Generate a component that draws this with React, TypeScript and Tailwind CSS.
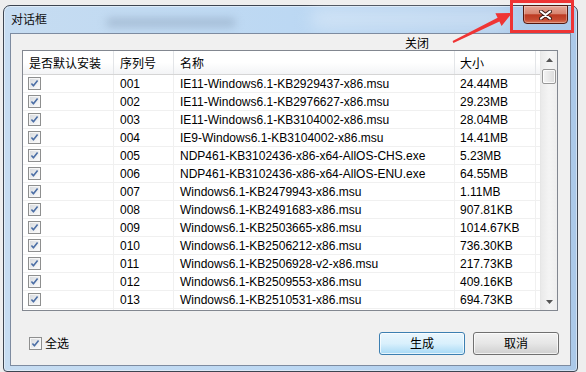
import React from "react";

const rows: [string, string, string][] = [
  ["001", "IE11-Windows6.1-KB2929437-x86.msu", "24.44MB"],
  ["002", "IE11-Windows6.1-KB2976627-x86.msu", "29.23MB"],
  ["003", "IE11-Windows6.1-KB3104002-x86.msu", "28.04MB"],
  ["004", "IE9-Windows6.1-KB3104002-x86.msu", "14.41MB"],
  ["005", "NDP461-KB3102436-x86-x64-AllOS-CHS.exe", "5.23MB"],
  ["006", "NDP461-KB3102436-x86-x64-AllOS-ENU.exe", "64.55MB"],
  ["007", "Windows6.1-KB2479943-x86.msu", "1.11MB"],
  ["008", "Windows6.1-KB2491683-x86.msu", "907.81KB"],
  ["009", "Windows6.1-KB2503665-x86.msu", "1014.67KB"],
  ["010", "Windows6.1-KB2506212-x86.msu", "736.30KB"],
  ["011", "Windows6.1-KB2506928-v2-x86.msu", "217.73KB"],
  ["012", "Windows6.1-KB2509553-x86.msu", "409.16KB"],
  ["013", "Windows6.1-KB2510531-x86.msu", "694.73KB"],
];

function Check() {
  return (
    <svg width="13" height="13" viewBox="0 0 13 13" className="block shrink-0">
      <defs>
        <linearGradient id="cbg" x1="0" y1="0" x2="1" y2="1">
          <stop offset="0" stopColor="#d8dbdf" />
          <stop offset="1" stopColor="#fbfbfb" />
        </linearGradient>
      </defs>
      <rect x="0.5" y="0.5" width="12" height="12" fill="#f6f6f6" stroke="#8e8f8f" />
      <rect x="2" y="2" width="9" height="9" fill="url(#cbg)" />
      <path d="M3.4 6.4 L5.4 8.8 L9.6 3.4" fill="none" stroke="#4c6fa6" strokeWidth="1.6" strokeLinejoin="round" />
    </svg>
  );
}

function Arrow({ down }: { down?: boolean }) {
  return (
    <svg width="7" height="4" viewBox="0 0 7 4" className="block">
      {down ? (
        <path d="M0 0 H7 L3.5 4 Z" fill="#555" />
      ) : (
        <path d="M0 4 H7 L3.5 0 Z" fill="#555" />
      )}
    </svg>
  );
}

export default function App() {
  return (
    <div className="relative w-[586px] h-[372px] overflow-hidden bg-[#eeeeee] font-['Liberation_Sans','Noto_Sans_CJK_SC',sans-serif] text-[12px] text-black">
      <div className="pl-[3px] pt-[5px] pr-[8px]">
        <div className="relative h-[367px] rounded-t-[7px] rounded-b-[4px] border border-[#3d4551] bg-gradient-to-r from-[#c6dcf1] via-[#bcd8f3] to-[#abc9e9] shadow-[inset_0_0_0_1px_rgba(255,255,255,0.45)] px-[6px] pb-[5px] flex flex-col">
          {/* title bar */}
          <div className="relative h-[27px] flex items-center pl-[1px]">
            <div className="absolute left-[96px] top-[12px] w-[130px] h-[9px] rounded-full bg-[#8aa0b9] opacity-50 blur-[4px]" />
            <div className="absolute left-[300px] top-[2px] w-[200px] h-[22px] rounded-full bg-white opacity-30 blur-[8px]" />
            <span className="relative leading-[14px] text-[12px] text-[#111]">对话框</span>
          </div>
          {/* client */}
          <div className="relative h-[333px] border border-[#7d8ba0] bg-[#f0f0f0] flex flex-col">
            <span className="absolute left-[394px] top-[3px] leading-[14px] text-[12px]">关闭</span>
            {/* list view */}
            <div className="relative z-10 ml-[11px] mt-[16px] w-[536px] h-[261px] border border-[#828790] bg-white flex">
              <div className="w-[517px] flex flex-col">
                <div className="h-[24px] border-b border-[#d5d5d5] bg-gradient-to-b from-white via-white to-[#f3f4f6] flex">
                  <div className="w-[91px] border-r border-[#e3e5e8] pl-[6px] pt-[6px] leading-[14px]">是否默认安装</div>
                  <div className="w-[60px] border-r border-[#e3e5e8] pl-[6px] pt-[6px] leading-[14px]">序列号</div>
                  <div className="w-[281px] border-r border-[#e3e5e8] pl-[6px] pt-[6px] leading-[14px]">名称</div>
                  <div className="w-[81px] border-r border-[#e3e5e8] pl-[5px] pt-[6px] leading-[14px]">大小</div>
                  <div className="flex-1" />
                </div>
                <div className="h-[235px] overflow-hidden">
                  {rows.map(([n, name, size]) => (
                    <div key={n} className="h-[18px] border-b border-[#f0f0f0] flex">
                      <div className="w-[91px] border-r border-[#f0f0f0] pl-[5px] flex items-center">
                        <Check />
                      </div>
                      <div className="w-[60px] border-r border-[#f0f0f0] pl-[6px] flex items-center leading-[14px]">{n}</div>
                      <div className="w-[281px] border-r border-[#f0f0f0] pl-[6px] flex items-center leading-[14px] whitespace-nowrap">{name}</div>
                      <div className="w-[81px] border-r border-[#f0f0f0] pl-[5px] flex items-center leading-[14px]">{size}</div>
                      <div className="flex-1" />
                    </div>
                  ))}
                  <div className="h-[18px] flex">
                    <div className="w-[91px] border-r border-[#f0f0f0]" />
                    <div className="w-[60px] border-r border-[#f0f0f0]" />
                    <div className="w-[281px] border-r border-[#f0f0f0]" />
                    <div className="w-[81px] border-r border-[#f0f0f0]" />
                  </div>
                </div>
              </div>
              {/* scrollbar */}
              <div className="w-[17px] bg-gradient-to-r from-[#eaeaea] via-[#f4f4f4] to-[#eeeeee] border-l border-[#e6e6e6] flex flex-col">
                <div className="h-[17px] flex items-center justify-center pt-[1px]">
                  <Arrow />
                </div>
                <div className="mt-[1px] ml-[1px] w-[14px] h-[15px] rounded-[2px] border border-[#979797] bg-gradient-to-r from-[#f4f4f4] to-[#dcdcdc] shadow-[inset_0_0_0_1px_rgba(255,255,255,0.8)]" />
                <div className="flex-1" />
                <div className="h-[17px] flex items-center justify-center">
                  <Arrow down />
                </div>
              </div>
            </div>
            {/* bottom */}
            <div className="mt-[21px] h-[23px] flex items-center pr-[11px]">
              <div className="ml-[18px] flex items-center gap-[3px]">
                <Check />
                <span className="leading-[14px]">全选</span>
              </div>
              <div className="ml-auto flex gap-[8px]">
                <button className="w-[86px] h-[23px] rounded-[3px] border border-[#3c7fb1] bg-gradient-to-b from-[#eaf6fd] via-[#d9f0fc] to-[#a7d9f5] shadow-[inset_0_0_0_1px_rgba(255,255,255,0.7)] leading-[14px] text-[12px]">生成</button>
                <button className="w-[86px] h-[23px] rounded-[3px] border border-[#707070] bg-gradient-to-b from-[#f2f2f2] via-[#e6e6e6] to-[#cfcfcf] shadow-[inset_0_0_0_1px_rgba(255,255,255,0.7)] leading-[14px] text-[12px]">取消</button>
              </div>
            </div>
          </div>
        </div>
      </div>

      {/* close button */}
      <div className="absolute left-[523px] top-[5px] w-[45px] h-[19px] rounded-b-[4px] border border-[#52180e] bg-[linear-gradient(to_bottom,#e6a696_0%,#d88571_45%,#bd3a22_52%,#c54a31_80%,#d97659_100%)] shadow-[inset_0_0_0_1px_rgba(255,255,255,0.3)] flex items-center justify-center">
        <svg width="13" height="10" viewBox="0 0 13 10" className="block">
          <path d="M2 1.5 L11 8.5 M11 1.5 L2 8.5" stroke="#3a1a14" strokeWidth="4" strokeLinecap="round" />
          <path d="M2 1.5 L11 8.5 M11 1.5 L2 8.5" stroke="#ffffff" strokeWidth="2.2" strokeLinecap="round" />
        </svg>
      </div>
      {/* red highlight box */}
      <div className="absolute left-[510px] top-0 w-[64px] h-[33px] border-[3px] border-[#ee3434]" />
      {/* red arrow */}
      <svg className="absolute left-0 top-0 pointer-events-none" width="586" height="372" viewBox="0 0 586 372">
        <polygon
          points="453.4,42.9 499.4,21.4 501.6,25.9 512,13 495.4,13.3 497.6,17.8 452.6,41.1"
          fill="#ef3535"
        />
      </svg>
    </div>
  );
}
